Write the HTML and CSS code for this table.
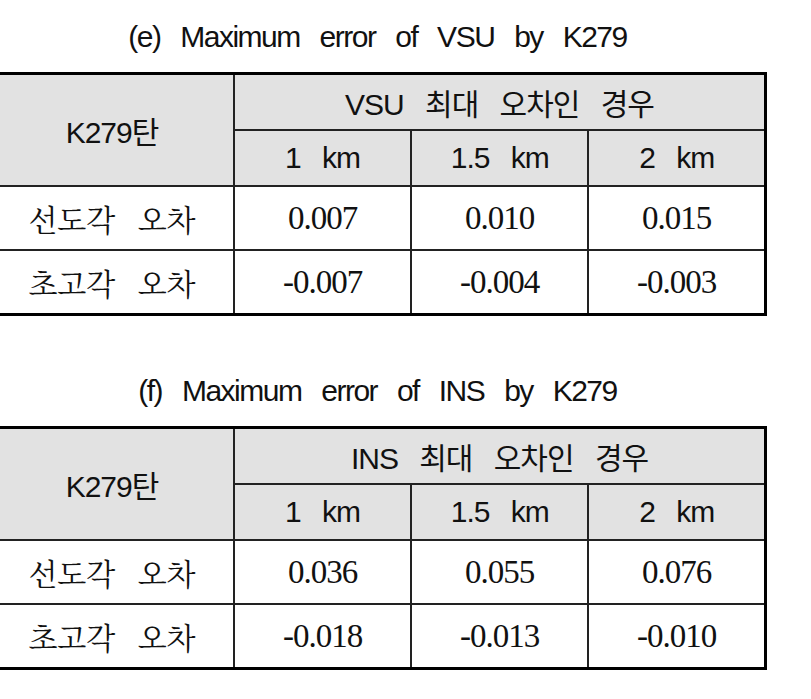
FILE: index.html
```html
<!DOCTYPE html>
<html lang="ko">
<head>
  <meta charset="UTF-8">
  <title>Maximum error by K279</title>
  <link rel="stylesheet" href="styles.css">
</head>
<body>

  <div class="block">
    <div class="caption">(e) Maximum error of VSU by K279</div>
    <table class="result">
      <tr class="head-top">
        <th rowspan="2" class="corner">K279탄</th>
        <th colspan="3">VSU 최대 오차인 경우</th>
      </tr>
      <tr class="head-sub">
        <th>1 km</th>
        <th>1.5 km</th>
        <th>2 km</th>
      </tr>
      <tr>
        <td class="label">선도각 오차</td>
        <td>0.007</td>
        <td>0.010</td>
        <td>0.015</td>
      </tr>
      <tr>
        <td class="label">초고각 오차</td>
        <td>-0.007</td>
        <td>-0.004</td>
        <td>-0.003</td>
      </tr>
    </table>
  </div>

  <div class="block second">
    <div class="caption">(f) Maximum error of INS by K279</div>
    <table class="result">
      <tr class="head-top">
        <th rowspan="2" class="corner">K279탄</th>
        <th colspan="3">INS 최대 오차인 경우</th>
      </tr>
      <tr class="head-sub">
        <th>1 km</th>
        <th>1.5 km</th>
        <th>2 km</th>
      </tr>
      <tr>
        <td class="label">선도각 오차</td>
        <td>0.036</td>
        <td>0.055</td>
        <td>0.076</td>
      </tr>
      <tr>
        <td class="label">초고각 오차</td>
        <td>-0.018</td>
        <td>-0.013</td>
        <td>-0.010</td>
      </tr>
    </table>
  </div>

</body>
</html>
```

FILE: styles.css
```css
body {
  margin: 0;
  background: #fff;
  color: #111;
  font-family: "Liberation Sans", "Noto Sans CJK KR", sans-serif;
}

.block {
  width: 779px;
  margin-left: -12px;
}

.second {
  margin-top: 38px;
}

.caption {
  height: 72px;
  line-height: 74px;
  text-align: center;
  font-size: 30px;
  letter-spacing: -1.5px;
  word-spacing: 13px;
}

.result {
  width: 779px;
  border-collapse: collapse;
  table-layout: fixed;
  border: 3px solid #000;
}

.result th,
.result td {
  border: 2px solid #222;
  text-align: center;
  padding: 0;
}

.result th {
  background-color: #e2e2e2;
  font-weight: normal;
  font-size: 30px;
  letter-spacing: -1px;
  word-spacing: 14px;
}

.result th.corner {
  width: 242px;
}

.head-top th,
.head-sub th {
  height: 54px;
}

.result td {
  height: 62px;
  font-family: "Liberation Serif", serif;
  font-size: 33px;
  letter-spacing: -1px;
}

.result td.label {
  font-family: "Noto Serif CJK KR", "Noto Sans CJK KR", serif;
  font-size: 30px;
  letter-spacing: 0;
  word-spacing: 13px;
}
```
